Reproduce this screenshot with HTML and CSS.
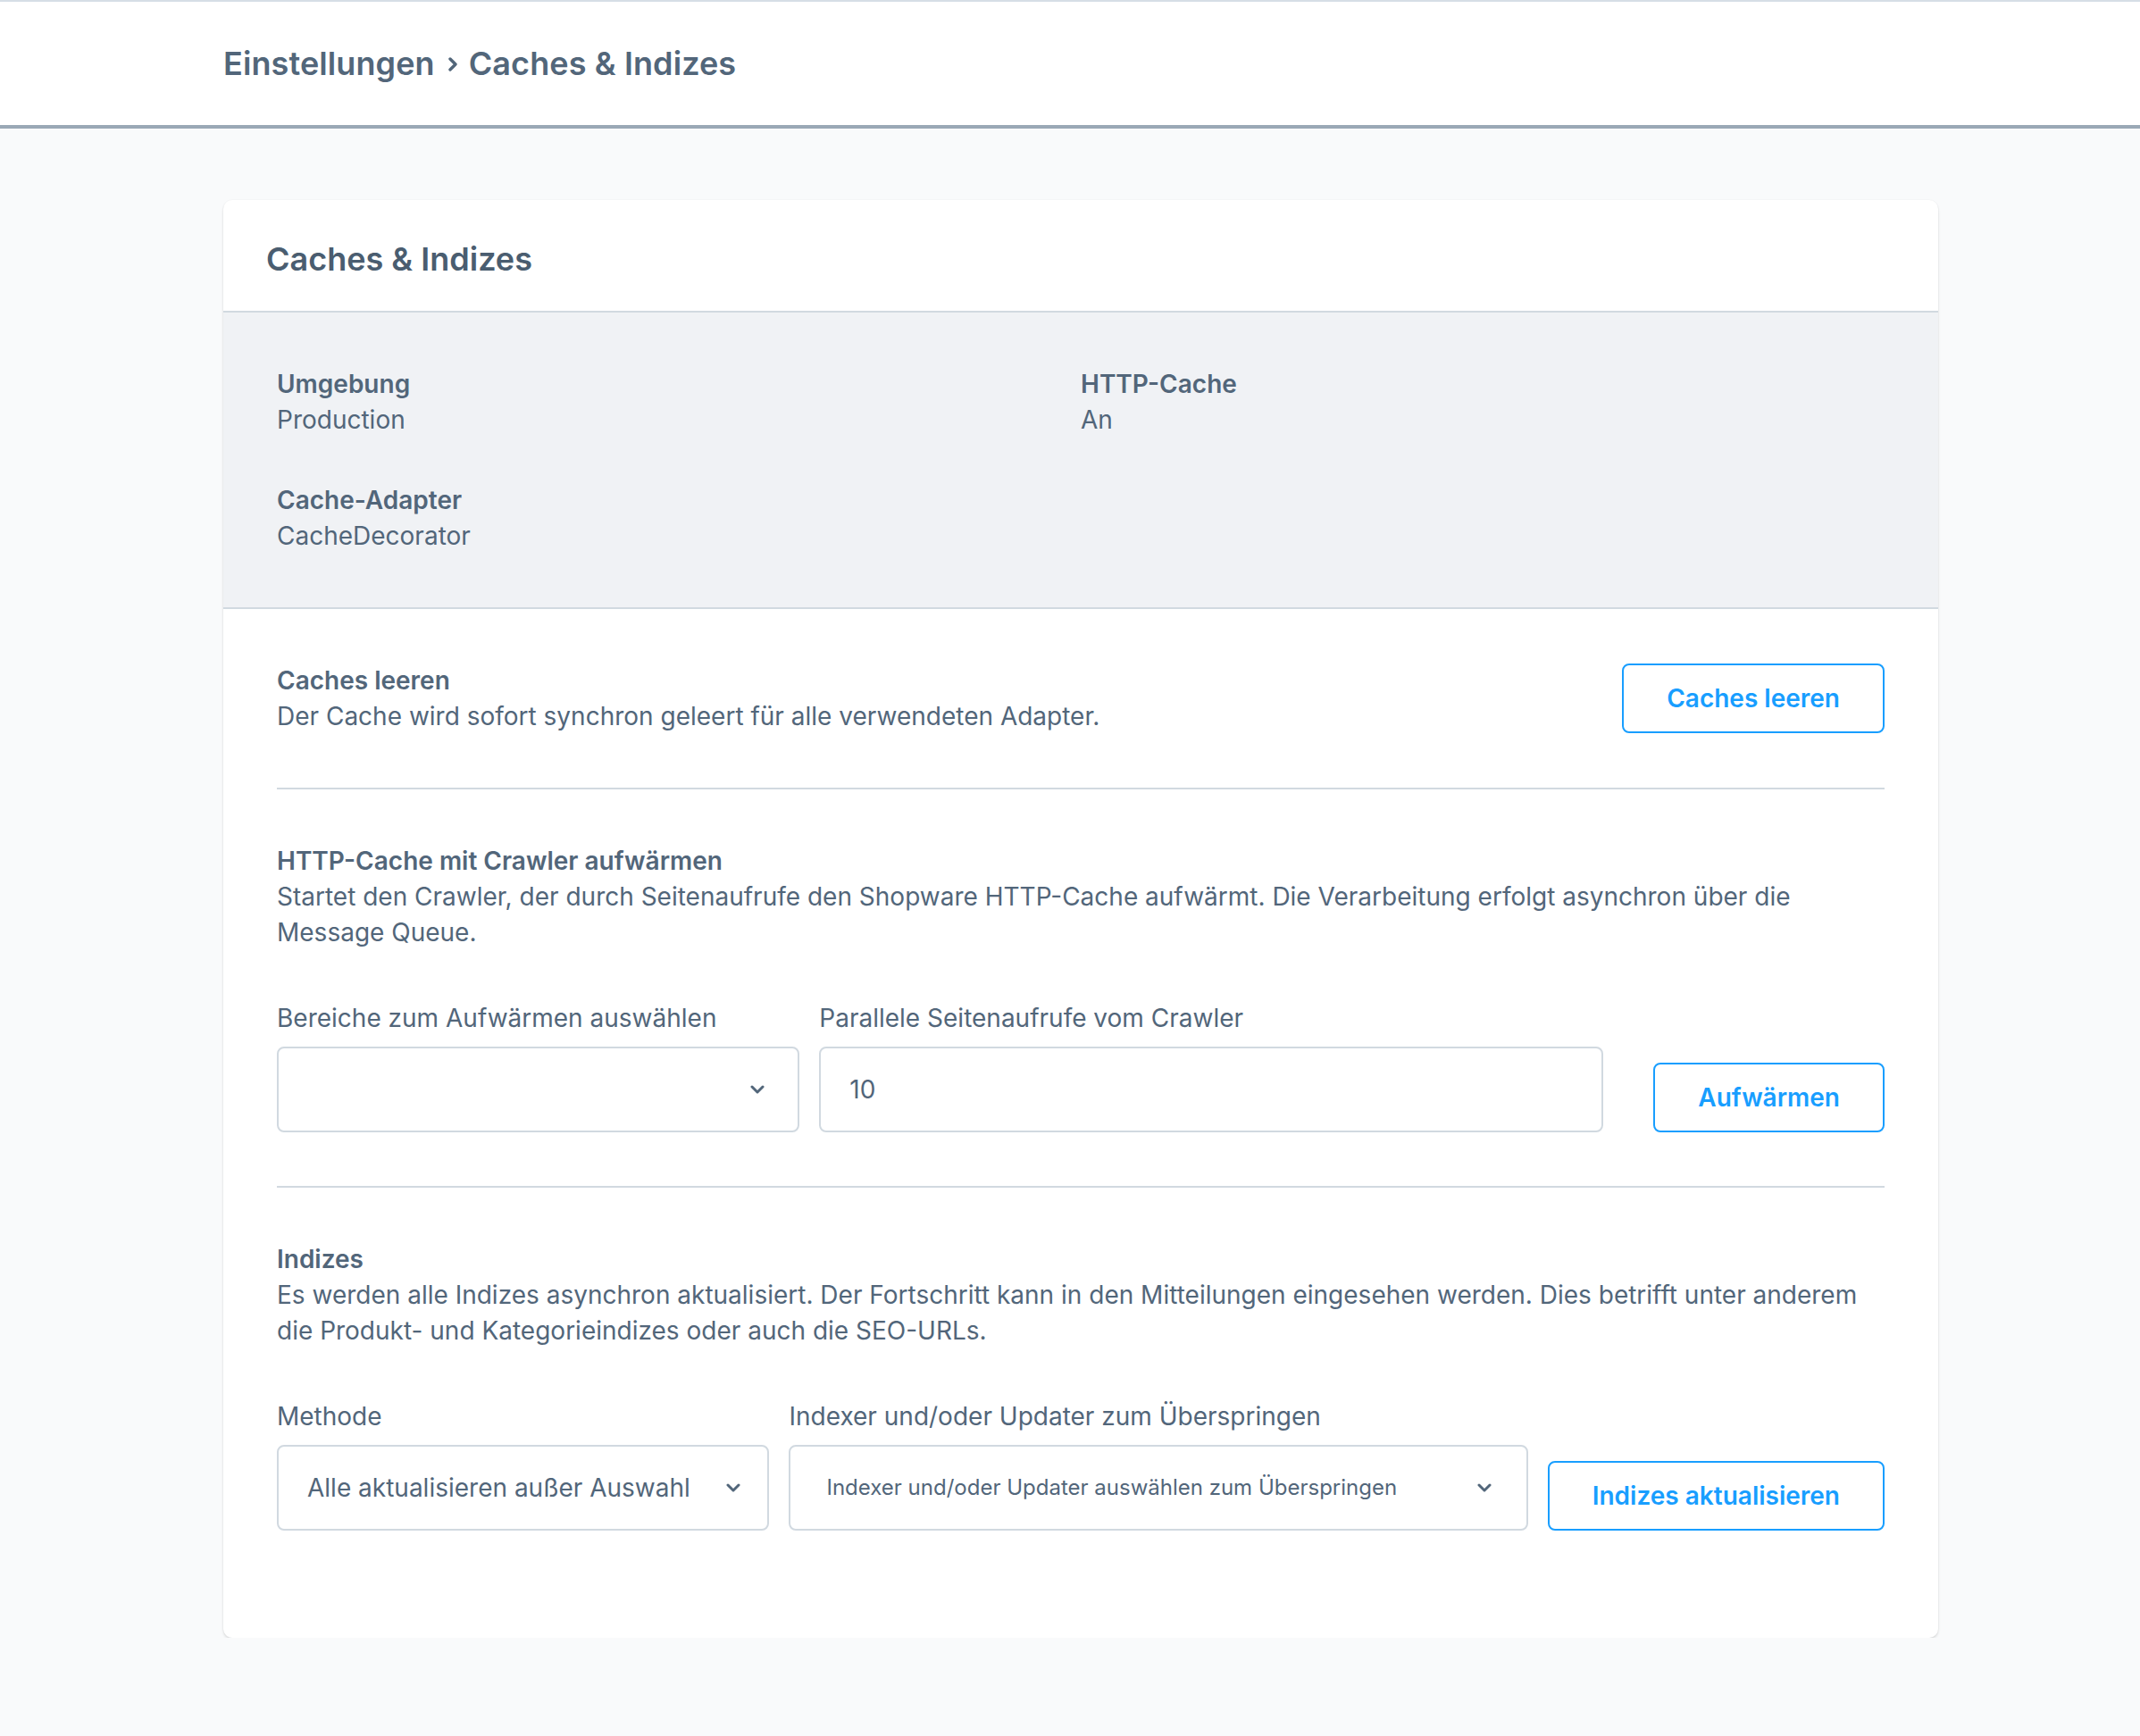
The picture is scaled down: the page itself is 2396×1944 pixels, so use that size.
FILE: index.html
```html
<!DOCTYPE html>
<html lang="de">
<head>
    <meta charset="UTF-8">
    <meta name="viewport" content="width=device-width, initial-scale=1.0">
    <title>Caches &amp; Indizes</title>
    <link rel="stylesheet" href="styles.css">
</head>
<body>
    <header class="smart-bar">
        <h1 class="breadcrumb">Einstellungen<svg class="breadcrumb-sep" width="12" height="18" viewBox="0 0 12 18"><polyline points="3,3 9,9 3,15" fill="none" stroke="#52667a" stroke-width="3.4" stroke-linecap="round" stroke-linejoin="round"/></svg>Caches &amp; Indizes</h1>
    </header>

    <main class="content">
        <section class="card">
            <div class="card-header">
                <h2 class="card-title">Caches &amp; Indizes</h2>
            </div>

            <dl class="info">
                <div class="info-item">
                    <dt>Umgebung</dt>
                    <dd>Production</dd>
                </div>
                <div class="info-item">
                    <dt>HTTP-Cache</dt>
                    <dd>An</dd>
                </div>
                <div class="info-item">
                    <dt>Cache-Adapter</dt>
                    <dd>CacheDecorator</dd>
                </div>
            </dl>

            <div class="card-body">
                <div class="block block-row">
                    <div class="block-text">
                        <h3 class="block-title">Caches leeren</h3>
                        <p class="block-desc">Der Cache wird sofort synchron geleert für alle verwendeten Adapter.</p>
                    </div>
                    <button class="btn">Caches leeren</button>
                </div>

                <div class="block">
                    <h3 class="block-title">HTTP-Cache mit Crawler aufwärmen</h3>
                    <p class="block-desc">Startet den Crawler, der durch Seitenaufrufe den Shopware HTTP-Cache aufwärmt. Die Verarbeitung erfolgt asynchron über die Message Queue.</p>
                    <div class="fields fields-warmup">
                        <div class="field">
                            <label class="field-label">Bereiche zum Aufwärmen auswählen</label>
                            <div class="input select select-wide">
                                <span class="select-value"></span>
                                <svg class="chevron" width="16" height="10" viewBox="0 0 16 10"><polyline points="2,2 8,8 14,2" fill="none" stroke="#52667a" stroke-width="3" stroke-linecap="round" stroke-linejoin="round"/></svg>
                            </div>
                        </div>
                        <div class="field">
                            <label class="field-label">Parallele Seitenaufrufe vom Crawler</label>
                            <div class="input">10</div>
                        </div>
                        <button class="btn btn-end">Aufwärmen</button>
                    </div>
                </div>

                <div class="block block-last">
                    <h3 class="block-title">Indizes</h3>
                    <p class="block-desc">Es werden alle Indizes asynchron aktualisiert. Der Fortschritt kann in den Mitteilungen eingesehen werden. Dies betrifft unter anderem die Produkt- und Kategorieindizes oder auch die SEO-URLs.</p>
                    <div class="fields fields-index">
                        <div class="field">
                            <label class="field-label">Methode</label>
                            <div class="input select select-method">
                                <span class="select-value">Alle aktualisieren außer Auswahl</span>
                                <svg class="chevron" width="16" height="10" viewBox="0 0 16 10"><polyline points="2,2 8,8 14,2" fill="none" stroke="#52667a" stroke-width="3" stroke-linecap="round" stroke-linejoin="round"/></svg>
                            </div>
                        </div>
                        <div class="field">
                            <label class="field-label">Indexer und/oder Updater zum Überspringen</label>
                            <div class="input select select-multi">
                                <span class="select-placeholder">Indexer und/oder Updater auswählen zum Überspringen</span>
                                <svg class="chevron" width="16" height="10" viewBox="0 0 16 10"><polyline points="2,2 8,8 14,2" fill="none" stroke="#52667a" stroke-width="3" stroke-linecap="round" stroke-linejoin="round"/></svg>
                            </div>
                        </div>
                        <button class="btn">Indizes aktualisieren</button>
                    </div>
                </div>
            </div>
        </section>
    </main>
</body>
</html>
```

FILE: styles.css
```css
:root {
    --text: #52667a;
    --border: #d1d9e0;
    --blue: #189eff;
    --page-bg: #f9fafb;
    --info-bg: #f0f2f5;
}
* {
    box-sizing: border-box;
}
body {
    margin: 0;
    font-family: Inter, "Noto Sans", sans-serif;
    color: var(--text);
    background-color: var(--page-bg);
    font-size: 28px;
    line-height: 40px;
}
h1, h2, h3, p, dl, dd {
    margin: 0;
}
.smart-bar {
    height: 144px;
    background-color: white;
    border-top: 2px solid #d6dee6;
    border-bottom: 4px solid #9aa8b6;
    padding-left: 250px;
    display: flex;
    align-items: center;
}
.breadcrumb {
    display: flex;
    align-items: center;
    font-size: 36px;
    font-weight: 600;
    line-height: 44px;
    letter-spacing: 0.1px;
    color: var(--text);
}
.breadcrumb-sep {
    margin: 2px 12px 0 14px;
}
.content {
    padding: 80px 0 0 250px;
}
.card {
    width: 1920px;
    background-color: white;
    border-radius: 10px;
    box-shadow: 0 2px 3px rgba(0, 0, 0, 0.12), 0 0 2px rgba(0, 0, 0, 0.05);
}
.card-header {
    padding: 44px 48px 36px;
    border-bottom: 2px solid var(--border);
}
.card-title {
    font-size: 36px;
    font-weight: 600;
    line-height: 44px;
    color: #4a5d70;
}
.info {
    background-color: var(--info-bg);
    display: grid;
    grid-template-columns: 1fr 1fr;
    row-gap: 50px;
    padding: 60px;
    border-bottom: 2px solid var(--border);
}
.info dt {
    font-weight: 600;
}
.card-body {
    padding: 0 60px 60px;
}
.block {
    padding: 60px 0;
    border-bottom: 2px solid var(--border);
}
.block-last {
    border-bottom: none;
}
.block-row {
    display: flex;
    justify-content: space-between;
    align-items: center;
}
.block-title {
    font-size: 28px;
    font-weight: 600;
    line-height: 40px;
}
.block-desc {
    line-height: 40px;
}
.fields {
    display: grid;
    column-gap: 22px;
    align-items: end;
    margin-top: 56px;
}
.fields-warmup {
    grid-template-columns: 2fr 3fr 1fr;
}
.fields-index {
    grid-template-columns: 2fr 3fr auto;
}
.field-label {
    display: block;
    line-height: 40px;
    margin-bottom: 12px;
}
.input {
    height: 96px;
    border: 2px solid var(--border);
    border-radius: 8px;
    padding: 0 32px;
    display: flex;
    align-items: center;
    background-color: white;
}
.select {
    justify-content: space-between;
}
.select-wide {
    padding-right: 37px;
}
.select-method {
    padding-right: 30px;
}
.select-multi {
    padding-left: 40px;
    padding-right: 39px;
}
.select-placeholder {
    font-size: 24px;
}
.chevron {
    flex-shrink: 0;
}
.btn {
    height: 78px;
    padding: 0 48px;
    border: 2px solid var(--blue);
    border-radius: 8px;
    background-color: white;
    color: var(--blue);
    font-family: Inter, "Noto Sans", sans-serif;
    font-size: 28px;
    font-weight: 600;
    cursor: pointer;
    white-space: nowrap;
}
.btn-end {
    justify-self: end;
}
```
